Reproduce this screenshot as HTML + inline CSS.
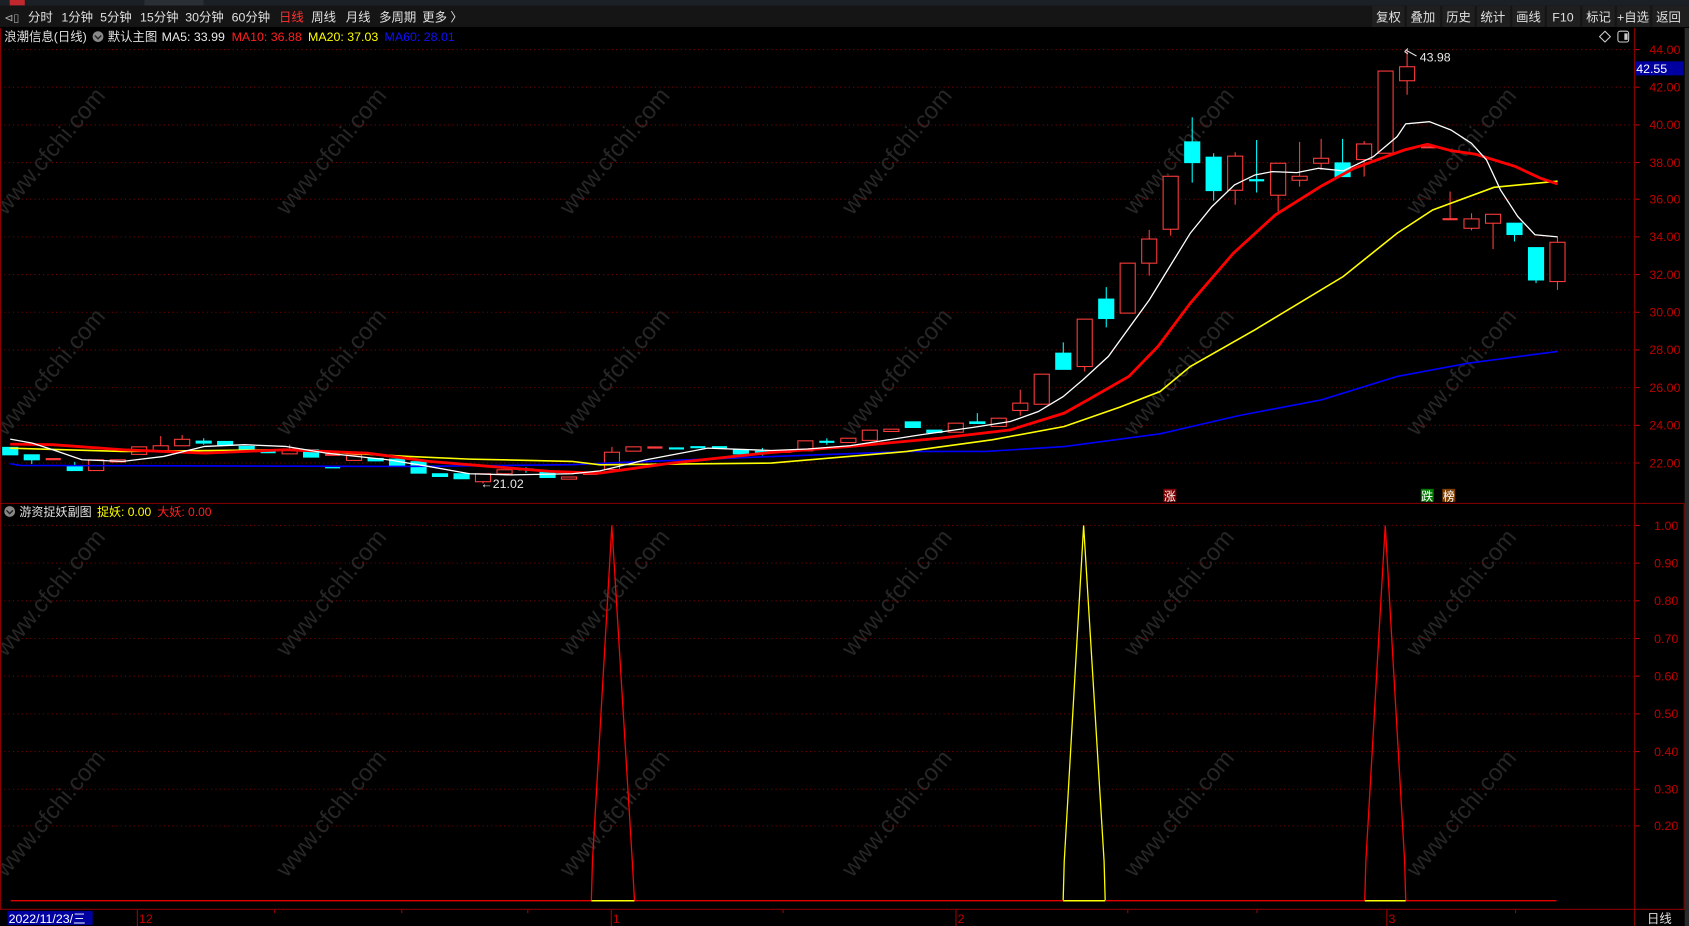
<!DOCTYPE html>
<html><head><meta charset="utf-8"><style>
html,body{margin:0;padding:0;background:#000;overflow:hidden}
svg{display:block}
text{font-family:"Liberation Sans","Noto Sans CJK SC",sans-serif}
</style></head><body>
<svg width="1689" height="926" viewBox="0 0 1568 860" preserveAspectRatio="none" xmlns="http://www.w3.org/2000/svg">
<rect width="1568" height="860" fill="#000"/>
<rect x="0" y="0" width="1568" height="5.5" fill="#1b1f26"/>
<rect x="9" y="0" width="14" height="5" fill="#c0282d"/>
<rect x="134" y="0" width="55" height="5" fill="#2a2e35"/>
<rect x="0" y="5.5" width="1568" height="19.5" fill="#151515"/>
<g font-size="11.5" fill="#e0e0e0">
<text x="4" y="20" font-size="10" fill="#aaa">⊲▯</text>
<text x="26" y="20">分时</text><text x="57" y="20">1分钟</text><text x="93" y="20">5分钟</text>
<text x="130" y="20">15分钟</text><text x="172" y="20">30分钟</text><text x="215" y="20">60分钟</text>
<text x="259" y="20" fill="#ff3030">日线</text><text x="289" y="20">周线</text><text x="321" y="20">月线</text>
<text x="352" y="20">多周期</text><text x="392" y="20">更多 〉</text>
</g>
<g fill="#1f1f1f">
<rect x="1274" y="5.5" width="30" height="19.5"/><rect x="1306" y="5.5" width="31" height="19.5"/>
<rect x="1339" y="5.5" width="30" height="19.5"/><rect x="1371" y="5.5" width="31" height="19.5"/>
<rect x="1404" y="5.5" width="30" height="19.5"/><rect x="1436" y="5.5" width="31" height="19.5"/>
<rect x="1469" y="5.5" width="30" height="19.5"/><rect x="1501" y="5.5" width="31" height="19.5"/>
<rect x="1534" y="5.5" width="34" height="19.5"/>
</g>
<g font-size="11.5" fill="#e0e0e0" text-anchor="middle">
<text x="1289" y="20">复权</text><text x="1321" y="20">叠加</text><text x="1354" y="20">历史</text>
<text x="1386" y="20">统计</text><text x="1419" y="20">画线</text><text x="1451" y="20">F10</text>
<text x="1484" y="20">标记</text><text x="1516" y="20">+自选</text><text x="1549" y="20">返回</text>
</g>
<g font-size="11.5">
<text x="4" y="38" fill="#e0e0e0">浪潮信息(日线)</text>
<circle cx="91" cy="34" r="5" fill="#888"/><path d="M88 33 L91 36 L94 33" stroke="#222" fill="none" stroke-width="1.3"/>
<text x="100" y="38" fill="#e0e0e0">默认主图</text>
<text x="150" y="38" fill="#e8e8e8">MA5: 33.99</text>
<text x="215" y="38" fill="#ff2020">MA10: 36.88</text>
<text x="286" y="38" fill="#ffff00">MA20: 37.03</text>
<text x="357" y="38" fill="#1010ff">MA60: 28.01</text>
</g>
<path d="M1490 29 L1495 34 L1490 39 L1485 34 Z" stroke="#ccc" fill="none"/>
<rect x="1502" y="29" width="10" height="10" rx="2" stroke="#ccc" fill="none"/><rect x="1508" y="31" width="3" height="6" fill="#ccc"/>
<g font-size="22" fill="#262626">
<text transform="translate(52,145) rotate(-50)" text-anchor="middle">www.cfchi.com</text>
<text transform="translate(313,145) rotate(-50)" text-anchor="middle">www.cfchi.com</text>
<text transform="translate(576,145) rotate(-50)" text-anchor="middle">www.cfchi.com</text>
<text transform="translate(838,145) rotate(-50)" text-anchor="middle">www.cfchi.com</text>
<text transform="translate(1100,145) rotate(-50)" text-anchor="middle">www.cfchi.com</text>
<text transform="translate(1362,145) rotate(-50)" text-anchor="middle">www.cfchi.com</text>
<text transform="translate(52,350) rotate(-50)" text-anchor="middle">www.cfchi.com</text>
<text transform="translate(313,350) rotate(-50)" text-anchor="middle">www.cfchi.com</text>
<text transform="translate(576,350) rotate(-50)" text-anchor="middle">www.cfchi.com</text>
<text transform="translate(838,350) rotate(-50)" text-anchor="middle">www.cfchi.com</text>
<text transform="translate(1100,350) rotate(-50)" text-anchor="middle">www.cfchi.com</text>
<text transform="translate(1362,350) rotate(-50)" text-anchor="middle">www.cfchi.com</text>
<text transform="translate(52,555) rotate(-50)" text-anchor="middle">www.cfchi.com</text>
<text transform="translate(313,555) rotate(-50)" text-anchor="middle">www.cfchi.com</text>
<text transform="translate(576,555) rotate(-50)" text-anchor="middle">www.cfchi.com</text>
<text transform="translate(838,555) rotate(-50)" text-anchor="middle">www.cfchi.com</text>
<text transform="translate(1100,555) rotate(-50)" text-anchor="middle">www.cfchi.com</text>
<text transform="translate(1362,555) rotate(-50)" text-anchor="middle">www.cfchi.com</text>
<text transform="translate(52,760) rotate(-50)" text-anchor="middle">www.cfchi.com</text>
<text transform="translate(313,760) rotate(-50)" text-anchor="middle">www.cfchi.com</text>
<text transform="translate(576,760) rotate(-50)" text-anchor="middle">www.cfchi.com</text>
<text transform="translate(838,760) rotate(-50)" text-anchor="middle">www.cfchi.com</text>
<text transform="translate(1100,760) rotate(-50)" text-anchor="middle">www.cfchi.com</text>
<text transform="translate(1362,760) rotate(-50)" text-anchor="middle">www.cfchi.com</text>
</g>
<g stroke="#7a0000" stroke-dasharray="1,3" stroke-width="1">
<path d="M0 46H1517M0 81H1517M0 116H1517M0 151H1517M0 185H1517M0 220H1517M0 255H1517M0 290H1517M0 325H1517M0 360H1517M0 395H1517M0 430H1517"/>
<path d="M0 488H1517M0 523H1517M0 558H1517M0 593H1517M0 628H1517M0 663H1517M0 698H1517M0 733H1517M0 767H1517"/>
</g>
<g stroke="#8a0000" stroke-width="1" fill="none">
<path d="M0.5 26V845"/>
<path d="M1517.5 26V860"/>
<path d="M1563.5 468V845"/>
<path d="M0 467.5H1564"/>
<path d="M0 844.5H1564"/>
</g>
<rect x="1564" y="26" width="4" height="834" fill="#2a2a2a"/>
<g font-size="11.5" fill="#c00000" text-anchor="end">
<text x="1560" y="50">44.00</text><text x="1560" y="85">42.00</text><text x="1560" y="120">40.00</text>
<text x="1560" y="155">38.00</text><text x="1560" y="189">36.00</text><text x="1560" y="224">34.00</text>
<text x="1560" y="259">32.00</text><text x="1560" y="294">30.00</text><text x="1560" y="329">28.00</text>
<text x="1560" y="364">26.00</text><text x="1560" y="399">24.00</text><text x="1560" y="434">22.00</text>
<text x="1558" y="492">1.00</text><text x="1558" y="527">0.90</text><text x="1558" y="562">0.80</text>
<text x="1558" y="597">0.70</text><text x="1558" y="632">0.60</text><text x="1558" y="667">0.50</text>
<text x="1558" y="702">0.40</text><text x="1558" y="737">0.30</text><text x="1558" y="771">0.20</text>
</g>
<g stroke="#c00000"><path d="M1518 46h4M1518 81h4M1518 116h4M1518 151h4M1518 185h4M1518 220h4M1518 255h4M1518 290h4M1518 325h4M1518 360h4M1518 395h4M1518 430h4M1518 488h4M1518 523h4M1518 558h4M1518 593h4M1518 628h4M1518 663h4M1518 698h4M1518 733h4M1518 767h4"/></g>
<rect x="1518" y="57" width="45" height="13" fill="#0000a0"/>
<text x="1519" y="68" font-size="11.5" fill="#fff">42.55</text>
<g stroke="#ff3c3c" fill="#000" stroke-width="1">
<rect x="82.3" y="427" width="14" height="10"/>
<rect x="102.3" y="427" width="14" height="2"/>
<rect x="122.2" y="415" width="14" height="7"/>
<rect x="142.2" y="414" width="14" height="5"/>
<rect x="162.1" y="408" width="14" height="6"/>
<rect x="261.9" y="417" width="14" height="4.5"/>
<rect x="321.7" y="422.4" width="14" height="5.2"/>
<rect x="441.4" y="440" width="14" height="7.4"/>
<rect x="461.4" y="436.3" width="14" height="3.7"/>
<rect x="521.2" y="443" width="14" height="2"/>
<rect x="561.1" y="420" width="14" height="16"/>
<rect x="581.1" y="415" width="14" height="4"/>
<rect x="740.7" y="409.4" width="14" height="9.3"/>
<rect x="780.6" y="407" width="14" height="4"/>
<rect x="800.5" y="399.5" width="14" height="9.5"/>
<rect x="820.5" y="398.6" width="14" height="2.1"/>
<rect x="880.3" y="393" width="14" height="8.4"/>
<rect x="920.2" y="388.4" width="14" height="7.6"/>
<rect x="940.2" y="374.4" width="14" height="6.8"/>
<rect x="960.1" y="347.5" width="14" height="27.9"/>
<rect x="1000" y="296.4" width="14" height="44"/>
<rect x="1039.9" y="244.4" width="14" height="46.4"/>
<rect x="1059.9" y="222" width="14" height="22.4"/>
<rect x="1079.8" y="163.7" width="14" height="49.2"/>
<rect x="1139.7" y="145" width="14" height="31.7"/>
<rect x="1179.6" y="151.6" width="14" height="29.7"/>
<rect x="1199.5" y="163.7" width="14" height="3.7"/>
<rect x="1219.5" y="147" width="14" height="4.6"/>
<rect x="1259.4" y="133.7" width="14" height="14.5"/>
<rect x="1279.3" y="66" width="14" height="76.3"/>
<rect x="1299.3" y="62" width="14" height="13"/>
<rect x="1359.1" y="203.3" width="14" height="8.7"/>
<rect x="1379.1" y="199" width="14" height="8.3"/>
<rect x="1438.9" y="225" width="14" height="36.5"/>
<path d="M149.2 405V414M169.1 404V408M268.9 413V417M448.4 447V449M568.1 415V420M947.2 362V374.4M947.2 381.2V386M1007 340.4V345M1066.9 213.5V222M1066.9 244.4V256M1086.8 212.9V218.8M1146.7 141.4V145M1146.7 176.7V190M1186.6 181.3V196.5M1206.5 131.8V163.7M1206.5 167.4V173.3M1226.5 129V147M1226.5 151.6V157.8M1266.4 130.9V133.7M1266.4 148.2V164M1306.3 46V62M1306.3 75V88M1346.2 177.9V203.6M1366.1 198V203.3M1366.1 212V214M1386.1 207.3V231.4M1445.9 219.7V225M1445.9 261.5V269.2"/>
<path d="M42.4 426.4H56.4M301.8 422.4H315.8M541.2 440H555.2M601 415.6H615M720.7 419.6H734.7M1339.2 203.6H1353.2M1319.2 136.8H1333.2" stroke-width="2"/>
</g>
<g fill="#00ffff" stroke="#00ffff" stroke-width="1">
<rect x="2.5" y="415.5" width="14" height="6.9"/>
<rect x="22.5" y="422.4" width="14" height="4.6"/>
<rect x="62.4" y="433" width="14" height="4"/>
<rect x="182.1" y="409.7" width="14" height="1.8"/>
<rect x="202" y="410" width="14" height="3"/>
<rect x="222" y="414.6" width="14" height="3.1"/>
<rect x="281.8" y="417.7" width="14" height="6.8"/>
<rect x="341.7" y="425.8" width="14" height="2.2"/>
<rect x="361.6" y="426.4" width="14" height="6.6"/>
<rect x="381.6" y="428.8" width="14" height="10.6"/>
<rect x="401.5" y="440" width="14" height="2.5"/>
<rect x="421.5" y="440" width="14" height="4.6"/>
<rect x="501.3" y="437.8" width="14" height="5.6"/>
<rect x="680.8" y="417.5" width="14" height="4"/>
<rect x="840.4" y="391.8" width="14" height="5.2"/>
<rect x="860.4" y="399.5" width="14" height="2.2"/>
<rect x="900.3" y="391.8" width="14" height="1.5"/>
<rect x="980.1" y="328" width="14" height="15"/>
<rect x="1020" y="277.8" width="14" height="18"/>
<rect x="1099.8" y="131.8" width="14" height="19.2"/>
<rect x="1119.7" y="146" width="14" height="31"/>
<rect x="1239.4" y="151.3" width="14" height="12.7"/>
<rect x="1399" y="207.3" width="14" height="10.5"/>
<rect x="1419" y="230" width="14" height="30"/>
<path d="M29.5 427V431M69.4 429V433M189.1 407V413M488.3 434V439M707.8 416V423M767.6 407V413M907.3 383.7V391.8M987.1 318V328M1027 266.7V304M1106.8 108.9V169.6M1126.7 142.3V186.3M1166.6 130V178.8M1246.4 129V151.3M1406 217.8V224.3M1426 260V263" fill="none"/>
<path d="M241.9 420H255.9M301.8 434H315.8M481.3 436H495.3M621 416.5H635M640.9 415.3H654.9M660.9 415.3H674.9M700.8 419.6H714.8M760.6 410.3H774.6M1159.6 167.4H1173.6" stroke-width="2" fill="none"/>
</g>
<polyline fill="none" stroke="#0000ff" stroke-width="1.5" points="9.5,430.7 19,432.3 379,433.2 531,431.6 577,429.5 716,424 845,419.3 915,419.3 988,414.7 1077,402.9 1150,386 1227,371.3 1297,349.6 1363,337.3 1446,326.4"/>
<polyline fill="none" stroke="#ffff00" stroke-width="1.5" points="9.5,416.2 114,419.3 265,417.7 379,423.9 436,426.4 531,428.5 557,431.7 716,430.1 842,419.3 921,408.5 988,396.1 1040,378 1077,363.6 1105,340.4 1165,306.3 1247,256.8 1297,216.6 1330,195 1387,174 1446,168.3"/>
<polyline fill="none" stroke="#ff0000" stroke-width="2.6" points="9.5,412.5 49,413 114,417.7 190,420.8 265,417.7 341,420.8 398,428.5 455,433.2 511,437.8 557,439.4 623,430.1 716,420.2 789,414.7 872,407 938,399.2 988,383.7 1010,371.3 1048,349.6 1075,321.8 1105,281.6 1145,235.2 1184,199.6 1227,172.6 1257,156.3 1304,139.2 1325,134 1347,139.9 1370,143.3 1407,154.7 1430,165.5 1446,170.8"/>
<polyline fill="none" stroke="#ffffff" stroke-width="1.2" points="9.5,407.8 30,411.5 49,417.7 76,427 114,428.5 152,423.9 190,414.6 227,413 265,414.6 303,420.8 360,427 398,433.2 436,440 474,441 531,440 557,437.3 600,427 657,416.2 716,418.4 750,417 789,414 855,403.8 905,396.7 938,391.5 964,382.2 987,368.3 1005,353 1029,331 1067,278.5 1082,254 1105,216.6 1125,192 1146,171.7 1165,162.5 1181,159.4 1204,160.3 1224,156.3 1247,158.7 1275,145.4 1297,126.9 1305,115 1327,113 1347,120.7 1366,133 1380,148.5 1393,176.4 1409,201 1425,218 1446,220"/>
<path d="M1306 47 L1315 52" stroke="#ddd" fill="none"/><path d="M1304 48 l3 -3 M1304 48 l3 2" stroke="#ddd"/>
<text x="1318" y="57" font-size="11.5" fill="#e8e8e8">43.98</text>
<text x="446" y="453" font-size="11.5" fill="#e8e8e8">←21.02</text>
<rect x="1080" y="454" width="12" height="12" fill="#800000"/><text x="1086" y="465" font-size="11" fill="#fff" text-anchor="middle">涨</text>
<rect x="1319" y="454" width="12" height="12" fill="#007a00"/><text x="1325" y="465" font-size="11" fill="#fff" text-anchor="middle">跌</text>
<rect x="1339" y="454" width="12" height="12" fill="#804000"/><text x="1345" y="465" font-size="11" fill="#fff" text-anchor="middle">榜</text>
<circle cx="9" cy="475" r="5" fill="#888"/><path d="M6 474 L9 477 L12 474" stroke="#222" fill="none" stroke-width="1.3"/>
<text x="18" y="479" font-size="11.2" fill="#e0e0e0">游资捉妖副图</text>
<text x="90" y="479" font-size="11.2" fill="#ffff00">捉妖: 0.00</text>
<text x="146" y="479" font-size="11.2" fill="#ff2020">大妖: 0.00</text>
<path d="M10 836.5H1445" stroke="#e00000" stroke-width="1.2"/>
<path d="M549 836.5H589M987 836.5H1026M1267 836.5H1305" stroke="#ffff00" stroke-width="1.4"/>
<polyline fill="none" stroke="#ff0000" stroke-width="1.2" points="549,836 550,800 568,488 587,800 589,836"/>
<polyline fill="none" stroke="#ffff00" stroke-width="1.2" points="987,836 988,800 1006,488 1025,800 1026,836"/>
<polyline fill="none" stroke="#ff0000" stroke-width="1.2" points="1267,836 1268,800 1286,488 1304,800 1305,836"/>
<rect x="7" y="846" width="79" height="13" fill="#0000a0"/>
<text x="8" y="857" font-size="11.5" fill="#fff">2022/11/23/三</text>
<g stroke="#a00000"><path d="M127.5 845V860M567.5 845V860M887.5 845V860M1287.5 845V860M255 845v3M373 845v3M490 845v3M727 845v3M1047 845v3M1167 845v3M1407 845v3"/></g>
<g font-size="11.5" fill="#c00000"><text x="129" y="857">12</text><text x="569" y="857">1</text><text x="889" y="857">2</text><text x="1289" y="857">3</text></g>
<text x="1529" y="857" font-size="11.5" fill="#e0e0e0">日线</text>
</svg>
</body></html>
